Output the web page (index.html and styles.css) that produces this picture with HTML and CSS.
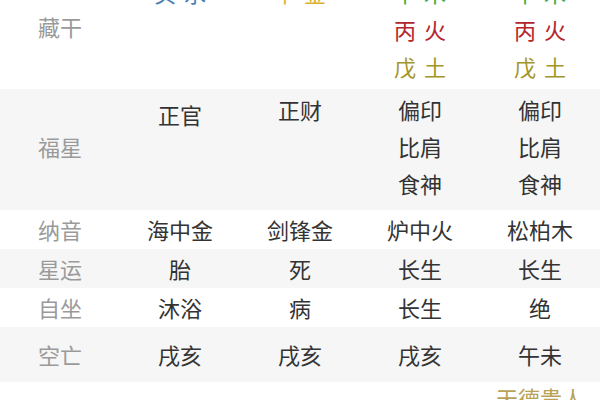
FILE: index.html
```html
<!DOCTYPE html>
<html lang="zh-CN">
<head>
<meta charset="utf-8">
<title>八字排盘</title>
<link rel="stylesheet" href="styles.css">
</head>
<body>
<div class="table">
  <div class="row row-cg">
    <div class="label label-cg">藏干</div>
    <div class="cell"><span class="c-water sp">癸 水</span></div>
    <div class="cell"><span class="c-metal sp">辛 金</span></div>
    <div class="cell"><span class="c-wood sp">甲 木</span><span class="c-fire sp">丙 火</span><span class="c-earth sp">戊 土</span></div>
    <div class="cell"><span class="c-wood sp">甲 木</span><span class="c-fire sp">丙 火</span><span class="c-earth sp">戊 土</span></div>
  </div>
  <div class="row alt row-fx">
    <div class="label">福星</div>
    <div class="cell cell-low"><span>正官</span></div>
    <div class="cell"><span>正财</span></div>
    <div class="cell"><span>偏印</span><span>比肩</span><span>食神</span></div>
    <div class="cell"><span>偏印</span><span>比肩</span><span>食神</span></div>
  </div>
  <div class="row single">
    <div class="label">纳音</div>
    <div class="cell"><span>海中金</span></div>
    <div class="cell"><span>剑锋金</span></div>
    <div class="cell"><span>炉中火</span></div>
    <div class="cell"><span>松柏木</span></div>
  </div>
  <div class="row alt single">
    <div class="label">星运</div>
    <div class="cell"><span>胎</span></div>
    <div class="cell"><span>死</span></div>
    <div class="cell"><span>长生</span></div>
    <div class="cell"><span>长生</span></div>
  </div>
  <div class="row single">
    <div class="label">自坐</div>
    <div class="cell"><span>沐浴</span></div>
    <div class="cell"><span>病</span></div>
    <div class="cell"><span>长生</span></div>
    <div class="cell"><span>绝</span></div>
  </div>
  <div class="row alt row-kw">
    <div class="label">空亡</div>
    <div class="cell"><span>戌亥</span></div>
    <div class="cell"><span>戌亥</span></div>
    <div class="cell"><span>戌亥</span></div>
    <div class="cell"><span>午未</span></div>
  </div>
  <div class="row row-sh">
    <div class="label"></div>
    <div class="cell"></div>
    <div class="cell"></div>
    <div class="cell"></div>
    <div class="cell"><span class="c-gold">天德贵人</span></div>
  </div>
</div>
</body>
</html>
```

FILE: styles.css
```css
html, body {
  margin: 0;
  padding: 0;
  background: #ffffff;
  overflow: hidden;
}
body {
  font-family: "Noto Sans CJK SC", "Noto Sans", sans-serif;
  font-size: 22px;
  line-height: 37px;
  color: #333333;
}
.table {
  width: 600px;
  display: flex;
  flex-direction: column;
}
.row {
  display: grid;
  grid-template-columns: repeat(5, 120px);
}
.row.alt {
  background: #f6f6f6;
}
.label {
  align-self: center;
  text-align: center;
  color: #9a9a9a;
}
.label-cg {
  margin-bottom: 6px;
}
.cell {
  display: flex;
  flex-direction: column;
  align-items: center;
}
.sp {
  word-spacing: 3px;
}
.row-cg {
  margin-top: -26px;
  padding-bottom: 4px;
}
.row-fx {
  padding: 2px 0 8px;
}
.cell-low {
  padding-top: 5px;
}
.single {
  padding: 1px 0;
}
.row-kw {
  padding: 9px 0;
}
.row-sh {
  line-height: 30px;
  height: 30px;
}
.c-water { color: #4a7fae; }
.c-metal { color: #d9b22a; }
.c-wood  { color: #43a843; }
.c-fire  { color: #b3262b; }
.c-earth { color: #a39528; }
.c-gold  { color: #b8a255; }
```
